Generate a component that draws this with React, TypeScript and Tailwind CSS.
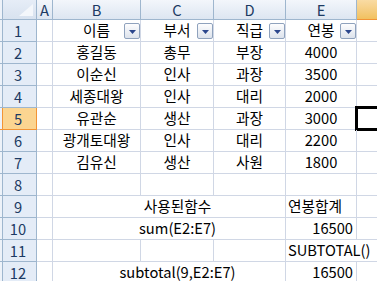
import React from "react";

type Cell = { t?: string; a?: "l" | "c" | "r"; nb?: boolean; f?: boolean };

const colW = ["w-[16px]", "w-[88px]", "w-[73px]", "w-[72px]", "w-[71px]", "flex-1"];
const colNames = ["A", "B", "C", "D", "E", "F"];

const rows: Cell[][] = [
  [{}, { t: "이름", a: "c", f: true }, { t: "부서", a: "c", f: true }, { t: "직급", a: "c", f: true }, { t: "연봉", a: "c", f: true }, {}],
  [{}, { t: "홍길동", a: "c" }, { t: "총무", a: "c" }, { t: "부장", a: "c" }, { t: "4000", a: "c" }, {}],
  [{}, { t: "이순신", a: "c" }, { t: "인사", a: "c" }, { t: "과장", a: "c" }, { t: "3500", a: "c" }, {}],
  [{}, { t: "세종대왕", a: "c" }, { t: "인사", a: "c" }, { t: "대리", a: "c" }, { t: "2000", a: "c" }, {}],
  [{}, { t: "유관순", a: "c" }, { t: "생산", a: "c" }, { t: "과장", a: "c" }, { t: "3000", a: "c" }, {}],
  [{}, { t: "광개토대왕", a: "c" }, { t: "인사", a: "c" }, { t: "대리", a: "c" }, { t: "2200", a: "c" }, {}],
  [{}, { t: "김유신", a: "c" }, { t: "생산", a: "c" }, { t: "사원", a: "c" }, { t: "1800", a: "c" }, {}],
  [{}, {}, {}, {}, {}, {}],
  [{}, { nb: true }, { t: "사용된함수", a: "c", nb: true }, {}, { t: "연봉합계", a: "l" }, {}],
  [{}, { nb: true }, { t: "sum(E2:E7)", a: "c", nb: true }, {}, { t: "16500", a: "r" }, {}],
  [{}, {}, {}, {}, { t: "SUBTOTAL()", a: "l", nb: true }, {}],
  [{}, { nb: true }, { t: "subtotal(9,E2:E7)", a: "c", nb: true }, {}, { t: "16500", a: "r" }, {}],
];

function FilterBtn() {
  return (
    <span className="absolute right-0 top-[3px] flex h-[16px] w-[16px] items-center justify-center rounded-[2px] border border-[#8fa2bd] bg-gradient-to-b from-[#fdfdfe] to-[#dde3ec]">
      <svg width="7" height="4" viewBox="0 0 7 4" className="mt-[1px]">
        <path d="M0 0h7L3.5 4z" fill="#2b468c" />
      </svg>
    </span>
  );
}

export default function App() {
  return (
    <div className="relative h-[281px] w-[377px] overflow-hidden bg-white font-['Malgun_Gothic','Noto_Sans_CJK_KR',sans-serif] text-[14.7px] text-black">
      {/* column header row */}
      <div className="flex h-[20px]">
        <div className="relative h-[20px] w-[37px] shrink-0 border-b border-r border-[#9eb6ce] bg-gradient-to-b from-[#e6edf7] to-[#d8e2ef] shadow-[inset_2px_0_0_#edf2f9,inset_3px_0_0_#9eb6ce]">
          <svg className="absolute right-[3px] bottom-[3px]" width="14" height="12" viewBox="0 0 14 12">
            <path d="M14 0V12H0z" fill="#f4f7fb" />
          </svg>
        </div>
        {colNames.map((n, i) =>
          n === "F" ? (
            <div
              key={n}
              className={`${colW[i]} h-[20px] border-b border-[#f29436] bg-gradient-to-b from-[#f9dba3] to-[#f1c15f]`}
            />
          ) : (
            <div
              key={n}
              className={`${colW[i]} flex h-[20px] shrink-0 items-end justify-center border-b border-r border-[#9eb6ce] bg-gradient-to-b from-[#f3f6fb] to-[#dde6f1] leading-[18px] text-[#1c3a63]`}
            >
              {n}
            </div>
          )
        )}
      </div>
      {rows.map((r, ri) => {
        const sel = ri === 4;
        return (
          <div key={ri} className="flex h-[22px]">
            <div
              className={
                sel
                  ? "flex h-[22px] w-[37px] shrink-0 items-end justify-center border-b border-r border-[#f29436] bg-[#fbd591] pb-[1px] leading-[18px] text-[#1c3a63] shadow-[inset_2px_0_0_#edf2f9,inset_3px_0_0_#f29436]"
                  : "flex h-[22px] w-[37px] shrink-0 items-end justify-center border-b border-r border-[#9eb6ce] bg-[#e4ecf7] pb-[1px] leading-[18px] text-[#1c3a63] shadow-[inset_2px_0_0_#edf2f9,inset_3px_0_0_#9eb6ce]"
              }
            >
              {ri + 1}
            </div>
            {r.map((c, ci) => {
              const align =
                c.a === "c" ? "justify-center" : c.a === "r" ? "justify-end pr-[3px]" : "justify-start pl-[2px]";
              const border = c.nb || ci === 5 ? "border-b" : "border-b border-r";
              return (
                <div
                  key={ci}
                  className={`${colW[ci]} relative flex h-[22px] shrink-0 items-end ${align} ${border} border-[#d0d7e5] pb-[2px] leading-[18px]`}
                >
                  {c.t && <span className="shrink-0 whitespace-nowrap">{c.t}</span>}
                  {c.f && <FilterBtn />}
                  {sel && ci === 5 && (
                    <span className="pointer-events-none absolute -top-[2px] -bottom-[2px] -left-[2px] -right-[40px] border-[3px] border-black" />
                  )}
                </div>
              );
            })}
          </div>
        );
      })}
    </div>
  );
}
